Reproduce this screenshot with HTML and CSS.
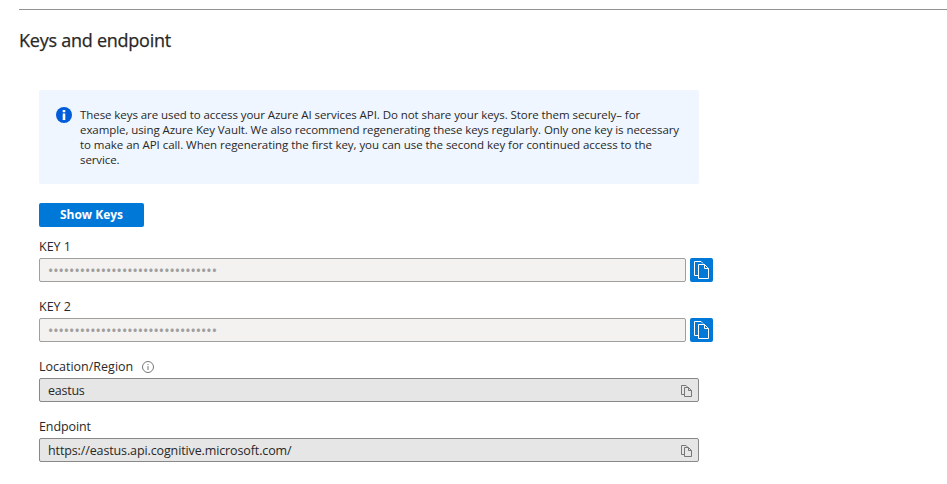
FILE: index.html
```html
<!DOCTYPE html>
<html lang="en">
<head>
<meta charset="utf-8">
<title>Keys and endpoint</title>
<link rel="stylesheet" href="styles.css">
</head>
<body>
<svg class="defs" aria-hidden="true">
  <symbol id="copy" viewBox="0 0 16 18">
    <path d="M4.5 14.5H.5V.5H7L9 2.5M4.5 3.5H10.5L14.5 7.5V17.5H4.5ZM10.5 3.5V7.5H14.5"/>
  </symbol>
  <symbol id="copy-small" viewBox="0 0 11 12">
    <path d="M3.5 9.5H.5V.5H5L6.5 2M3.5 2.5H7.5L10.5 5.5V11.5H3.5ZM7.5 2.5V5.5H10.5"/>
  </symbol>
</svg>
<main class="page">
  <h1 class="title"><span>Keys and endpoint</span></h1>
  <section class="content">
    <div class="notice">
      <svg class="notice-icon" viewBox="0 0 16 16"><circle cx="8" cy="8" r="8"/><path d="M6.7 6.5H9.3V13H6.7ZM6.7 3H9.3V5.2H6.7Z"/></svg>
      <p class="notice-text">
        <span class="l1">These keys are used to access your Azure AI services API. Do not share your keys. Store them securely– for</span><br>
        <span class="l2">example, using Azure Key Vault. We also recommend regenerating these keys regularly. Only one key is necessary</span><br>
        <span class="l3">to make an API call. When regenerating the first key, you can use the second key for continued access to the</span><br>
        <span class="l4">service.</span>
      </p>
    </div>
    <button class="show" type="button">Show Keys</button>
    <div class="field">
      <div class="label key">KEY 1</div>
      <div class="row">
        <div class="box secret"><span class="dots">••••••••••••••••••••••••••••••••</span></div>
        <button class="copy" type="button" aria-label="Copy"><svg><use href="#copy"/></svg></button>
      </div>
    </div>
    <div class="field">
      <div class="label key">KEY 2</div>
      <div class="row">
        <div class="box secret"><span class="dots">••••••••••••••••••••••••••••••••</span></div>
        <button class="copy" type="button" aria-label="Copy"><svg><use href="#copy"/></svg></button>
      </div>
    </div>
    <div class="field">
      <div class="label"><span class="loc">Location/Region</span>
        <svg class="hint" viewBox="0 0 12 12"><circle cx="6" cy="6" r="5.5"/><path d="M6 5V9M6 3V4"/></svg>
      </div>
      <div class="box value"><span class="region">eastus</span><svg class="copy-small"><use href="#copy-small"/></svg></div>
    </div>
    <div class="field">
      <div class="label"><span class="end">Endpoint</span></div>
      <div class="box value"><span class="url">https://eastus.api.cognitive.microsoft.com/</span><svg class="copy-small"><use href="#copy-small"/></svg></div>
    </div>
  </section>
</main>
</body>
</html>
```
FILE: styles.css
```css
* { box-sizing: border-box; }
body {
  margin: 0;
  background: #fff;
  color: #292827;
  font-family: "Open Sans", "Noto Sans", sans-serif;
  font-size: 12.5px;
}
.defs { display: none; }
.page { margin: 9px 0 0 19px; border-top: 1px solid #929292; }
.title {
  margin: 17px 0 0;
  font-size: 18px;
  line-height: 26px;
  font-weight: 500;
  letter-spacing: -.25px;
  -webkit-text-stroke: .25px currentColor;
}
.content { width: 674px; margin: 37px 0 0 20px; }
.notice {
  display: flex;
  width: 660px;
  height: 94px;
  padding: 17px 0 0 17px;
  gap: 8px;
  border-radius: 2px;
  background: #eff6ff;
}
.notice-icon { flex: none; width: 16px; height: 16px; fill: #015cda; }
.notice-icon path { fill: #fff; }
.notice-text { margin: 0; font-size: 11.5px; line-height: 15px; white-space: nowrap; }
.l1 { letter-spacing: -.07px; }
.l2 { letter-spacing: -.075px; }
.l3 { letter-spacing: -.045px; }
.l4 { letter-spacing: -.1px; }
.show {
  display: block;
  width: 105px;
  height: 24px;
  margin: 19px 0 10px;
  padding: 0 0 1px;
  border: 0;
  border-radius: 2px;
  background: #0078d7;
  color: #fff;
  font: 700 12px/23px "Open Sans", sans-serif;
}
.field { height: 60px; }
.label { display: flex; align-items: center; height: 21px; padding-bottom: 3px; }
.row { display: flex; gap: 4px; }
.box {
  display: flex;
  align-items: center;
  height: 24px;
  padding: 0 7px 0 8px;
  border: 1px solid #8a8886;
  border-radius: 2px;
  white-space: nowrap;
}
.secret { width: 647px; border-color: #a19f9d; background: #f3f2f1; color: #a19f9d; }
.dots { font-size: 14px; letter-spacing: .015px; -webkit-text-stroke: .2px currentColor; }
.value { width: 660px; justify-content: space-between; background: #e6e6e6; }
.region { letter-spacing: -.25px; }
.url { letter-spacing: -.12px; }
.end { letter-spacing: -.1px; }
.copy { display: flex; align-items: flex-start; width: 23px; height: 24px; padding: 3px 0 0 4px; border: 0; border-radius: 2px; background: #0078d7; }
.copy svg { display: block; width: 16px; height: 18px; fill: none; stroke: #fff; }
.copy-small { width: 11px; height: 12px; margin: 2px -1px 0 0; fill: none; stroke: #777; }
.hint { width: 12px; height: 12px; margin: 1px 0 0 9px; fill: none; stroke: #777; }
```
